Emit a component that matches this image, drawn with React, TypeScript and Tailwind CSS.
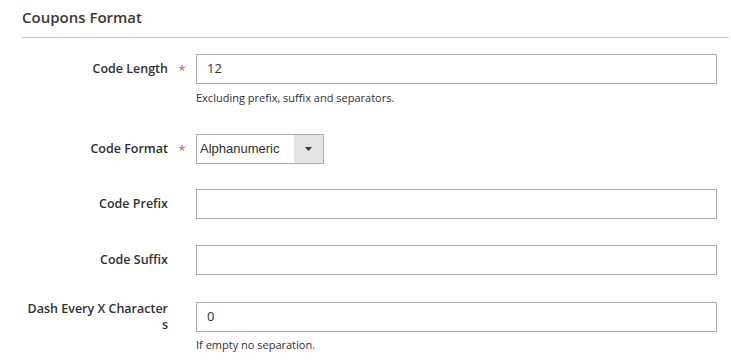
import React from "react";

const font = { fontFamily: '"Open Sans", "Liberation Sans", sans-serif' };

function Row({
  label,
  required,
  children,
}: {
  label: string;
  required?: boolean;
  children: React.ReactNode;
}) {
  return (
    <div className="flex items-start">
      <div className="flex h-[30px] w-[146px] shrink-0 items-center justify-end pl-[4px]">
        <span className="break-all text-right text-[12.5px] leading-[16px] font-semibold text-[#303030]">
          {label}
        </span>
      </div>
      <div className="flex h-[30px] w-[28px] shrink-0 items-center justify-center">
        {required && (
          <span className="mt-[2px] text-[13px] leading-none text-[#eb5202]">*</span>
        )}
      </div>
      <div className="flex-1">{children}</div>
    </div>
  );
}

function TextInput({ value }: { value?: string }) {
  return (
    <div className="flex h-[30px] items-center border border-[#adadad] bg-white px-[10px] text-[13px] text-[#303030]">
      {value}
    </div>
  );
}

export default function App() {
  return (
    <div className="min-h-[361px] bg-white pl-[22px] pr-[14px]" style={font}>
      {/* header */}
      <div className="mr-[-12px] border-b border-[#c8c4bc] pt-[7px] pb-[10px]">
        <h2 className="text-[15px] leading-[20px] font-semibold text-[#41362f]">Coupons Format</h2>
      </div>

      <div className="pt-[16px]">
        <Row label="Code Length" required>
          <TextInput value="12" />
          <p className="mt-[6px] text-[11px] leading-[16px] text-[#303030]">
            Excluding prefix, suffix and separators.
          </p>
        </Row>

        <div className="mt-[28px]">
          <Row label="Code Format" required>
            <div className="flex h-[30px] w-[128px] border border-[#adadad] bg-white">
              <div
                className="flex flex-1 items-center pl-[3px] text-[13px] text-[#303030]"
                style={{ fontFamily: '"Liberation Sans", Arial, sans-serif' }}
              >
                Alphanumeric
              </div>
              <div className="flex w-[29px] items-center justify-center bg-[#e3e3e3]">
                <svg width="7" height="4" viewBox="0 0 7 4">
                  <path d="M0 0h7L3.5 4z" fill="#41362f" />
                </svg>
              </div>
            </div>
          </Row>
        </div>

        <div className="mt-[25px]">
          <Row label="Code Prefix">
            <TextInput />
          </Row>
        </div>

        <div className="mt-[26px]">
          <Row label="Code Suffix">
            <TextInput />
          </Row>
        </div>

        <div className="mt-[27px]">
          <Row label="Dash Every X Characters">
            <TextInput value="0" />
            <p className="mt-[5px] text-[11px] leading-[16px] text-[#303030]">
              If empty no separation.
            </p>
          </Row>
        </div>
      </div>
    </div>
  );
}
